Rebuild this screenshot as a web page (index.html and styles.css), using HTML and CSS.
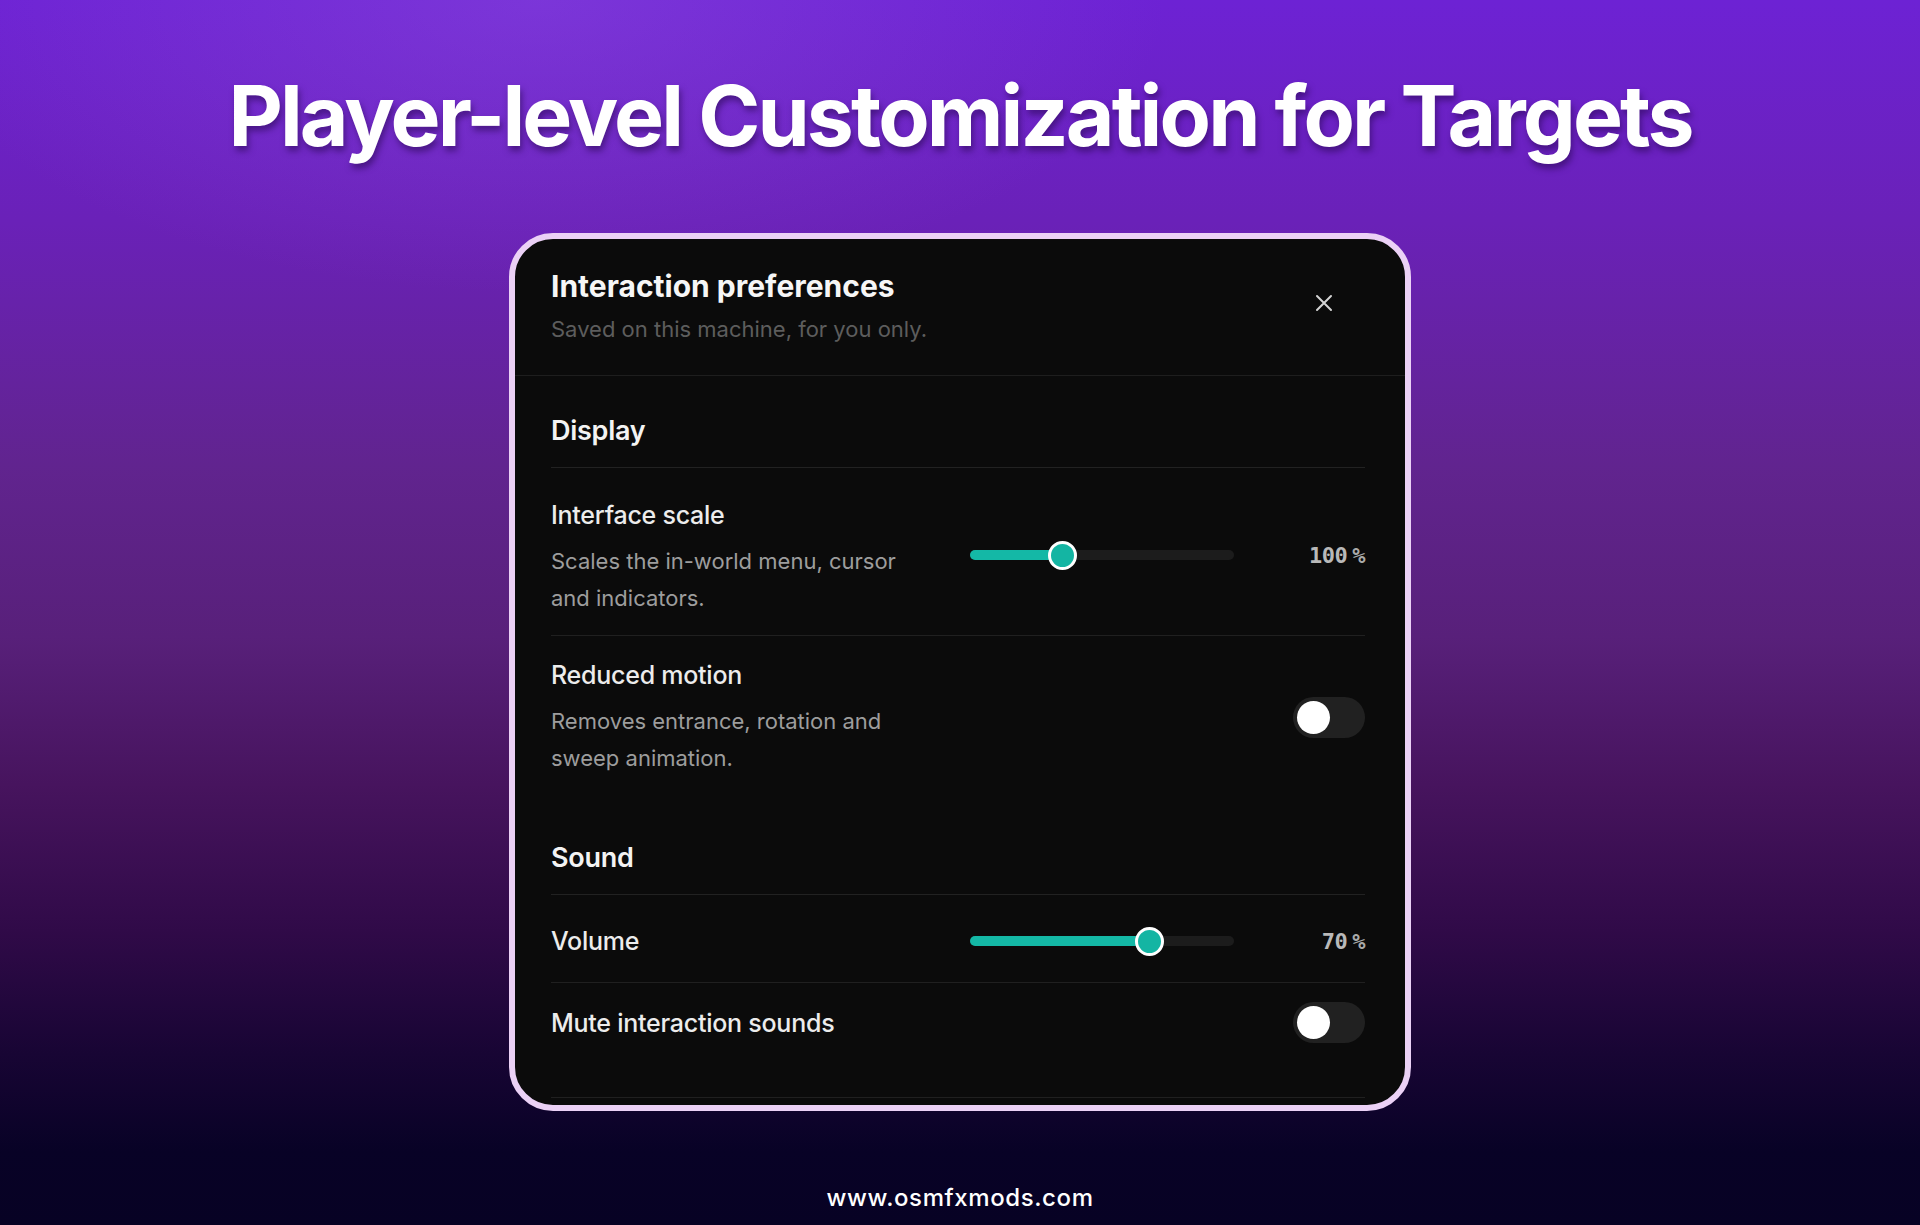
FILE: index.html
```html
<!DOCTYPE html>
<html lang="en">
<head>
<meta charset="utf-8">
<title>Player-level Customization for Targets</title>
<link rel="stylesheet" href="styles.css">
</head>
<body>
<main class="page">
  <h1 class="hero-title">Player-level Customization for Targets</h1>

  <section class="card">
    <header class="card-header">
      <div class="card-heading">
        <h2 class="card-title">Interaction preferences</h2>
        <p class="card-subtitle">Saved on this machine, for you only.</p>
      </div>
      <button class="close-btn" aria-label="Close">
        <svg width="18" height="18" viewBox="0 0 18 18" fill="none" stroke="#d4d4d4" stroke-width="2" stroke-linecap="round"><path d="M2 2 L16 16 M16 2 L2 16"/></svg>
      </button>
    </header>

    <div class="card-body">
      <h3 class="section-title">Display</h3>

      <div class="row row-first">
        <div class="row-text">
          <div class="row-label">Interface scale</div>
          <div class="row-desc">Scales the in-world menu, cursor<br>and indicators.</div>
        </div>
        <div class="control">
          <div class="slider" style="--p:0.333">
            <div class="slider-fill"></div>
            <div class="slider-thumb"></div>
          </div>
          <div class="value">100<span class="pct">%</span></div>
        </div>
      </div>

      <div class="row row-plain">
        <div class="row-text">
          <div class="row-label">Reduced motion</div>
          <div class="row-desc">Removes entrance, rotation and<br>sweep animation.</div>
        </div>
        <div class="toggle"><span class="knob"></span></div>
      </div>

      <h3 class="section-title section-gap">Sound</h3>

      <div class="row row-compact">
        <div class="row-text">
          <div class="row-label">Volume</div>
        </div>
        <div class="control">
          <div class="slider" style="--p:0.7">
            <div class="slider-fill"></div>
            <div class="slider-thumb"></div>
          </div>
          <div class="value">70<span class="pct">%</span></div>
        </div>
      </div>

      <div class="row row-last">
        <div class="row-text">
          <div class="row-label">Mute interaction sounds</div>
        </div>
        <div class="toggle"><span class="knob"></span></div>
      </div>
    </div>
  </section>

  <footer class="site-footer">www.osmfxmods.com</footer>
</main>
</body>
</html>
```

FILE: styles.css
```css
* { box-sizing: border-box; }

html, body {
  margin: 0;
  padding: 0;
  width: 1920px;
  height: 1225px;
  overflow: hidden;
}

body {
  font-family: "Inter", "Noto Sans", sans-serif;
  color: #fff;
  background:
    radial-gradient(ellipse 900px 420px at 28% 0%, rgba(150, 90, 225, 0.35), rgba(150, 90, 225, 0) 70%),
    linear-gradient(180deg,
      #6d22d4 0%,
      #6a21b8 18%,
      #61248f 38%,
      #58207a 52%,
      #47145e 64%,
      #300a48 76%,
      #180534 86%,
      #080226 94%,
      #070224 100%);
}

.page {
  display: flex;
  flex-direction: column;
  align-items: center;
  height: 1225px;
}

.hero-title {
  margin: 70px 0 0;
  font-size: 84px;
  line-height: 92px;
  font-weight: 700;
  letter-spacing: -0.034em;
  color: #fff;
  text-shadow: 2px 5px 6px rgba(40, 8, 80, 0.55);
}

.card {
  margin-top: 71px;
  width: 902px;
  height: 878px;
  border: 6px solid #ebd1f6;
  border-radius: 44px;
  background: #0b0b0b;
  overflow: hidden;
  display: flex;
  flex-direction: column;
}

.card-header {
  display: flex;
  justify-content: space-between;
  align-items: flex-start;
  padding: 29px 56px 31px 36px;
  border-bottom: 1px solid #1e1e1e;
}

.card-title {
  margin: 0;
  font-size: 30px;
  line-height: 36px;
  font-weight: 700;
  letter-spacing: 0;
  color: #f6f6f6;
}

.card-subtitle {
  margin: 10px 0 0;
  font-size: 22px;
  line-height: 30px;
  font-weight: 400;
  letter-spacing: 0;
  color: #5d5d5d;
}

.close-btn {
  margin-top: 10px;
  width: 50px;
  height: 50px;
  padding: 0;
  border: 0;
  background: transparent;
  display: flex;
  align-items: center;
  justify-content: center;
}

.card-body {
  padding: 0 40px 0 36px;
}

.section-title {
  margin: 38px 0 0;
  padding-bottom: 19px;
  border-bottom: 1px solid #222;
  font-size: 27px;
  line-height: 34px;
  font-weight: 600;
  letter-spacing: -0.01em;
  color: #f3f3f3;
}

.section-gap { margin-top: 64px; }

.row {
  display: flex;
  justify-content: space-between;
  align-items: center;
  border-bottom: 1px solid #202020;
}

.row-first { padding: 31px 0 18px; }
.row-first .control { margin-top: -6px; }
.row-plain { padding: 23px 0 0; border-bottom: 0; }
.row-plain .toggle { margin-top: -2px; }
.row-compact { padding: 30px 0 25px; }
.row-last { padding: 19px 0 54px; }

.row-label {
  font-size: 25px;
  line-height: 32px;
  font-weight: 500;
  letter-spacing: -0.01em;
  color: #ececec;
}

.row-desc {
  margin-top: 12px;
  font-size: 22px;
  line-height: 37px;
  font-weight: 400;
  letter-spacing: 0;
  color: #9d9d9d;
}

.control {
  display: flex;
  align-items: center;
  width: 395px;
}

.slider {
  position: relative;
  width: 264px;
  height: 10px;
  border-radius: 5px;
  background: #1c1c1c;
}

.slider-fill {
  height: 10px;
  border-radius: 5px;
  background: #14b8a6;
  width: calc(var(--p) * (100% - 29px) + 14.5px);
}

.slider-thumb {
  position: absolute;
  top: -9.5px;
  left: calc(var(--p) * (100% - 29px));
  width: 29px;
  height: 29px;
  border-radius: 50%;
  background: #14b5a3;
  border: 3px solid #fff;
}

.value {
  flex: 1;
  text-align: right;
  font-family: "DejaVu Sans Mono", "Liberation Mono", monospace;
  font-size: 22px;
  font-weight: 700;
  letter-spacing: -0.5px;
  color: #b9b9b9;
}

.pct { margin-left: 5px; color: #a9a9a9; }

.toggle {
  position: relative;
  width: 72px;
  height: 41px;
  border-radius: 21px;
  background: #212121;
  flex-shrink: 0;
}

.knob {
  position: absolute;
  top: 4px;
  left: 4px;
  width: 33px;
  height: 33px;
  border-radius: 50%;
  background: #fff;
}

.site-footer {
  margin-top: 72px;
  font-size: 24px;
  line-height: 30px;
  font-weight: 500;
  letter-spacing: 0.025em;
  color: #fff;
}
```
